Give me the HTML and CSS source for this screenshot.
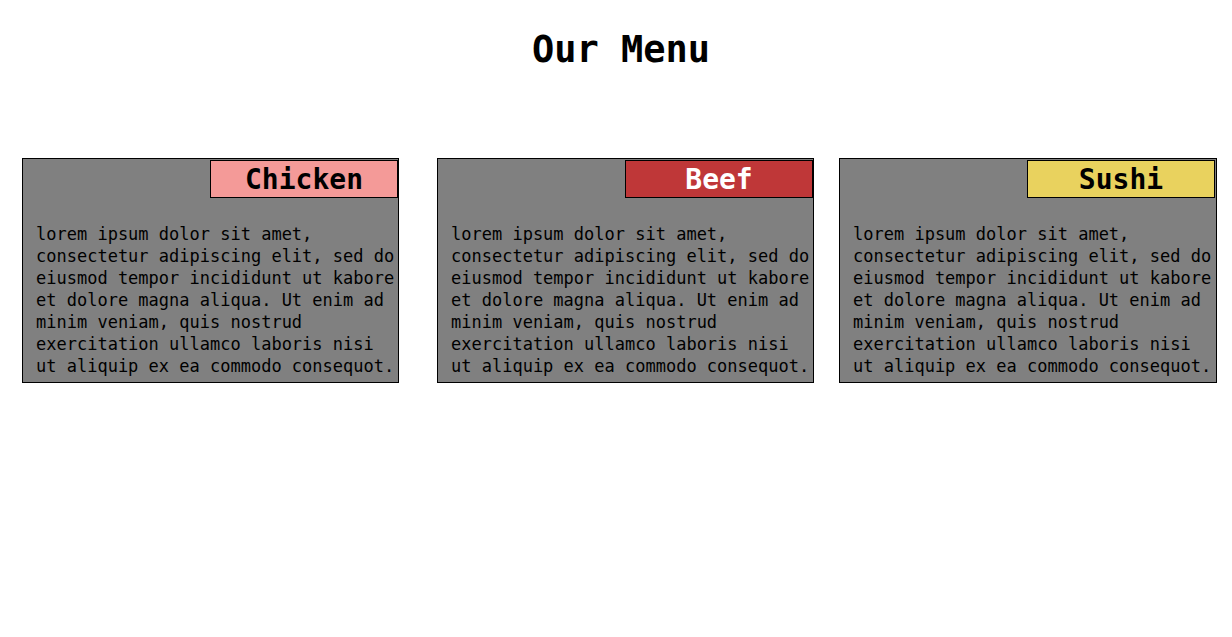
FILE: index.html
```html
<!DOCTYPE html>
<html lang="en">
<head>
<meta charset="utf-8">
<title>Our Menu</title>
<link rel="stylesheet" href="styles.css">
</head>
<body>
  <h1 class="title">Our Menu</h1>
  <main class="menu">
    <section class="card card-first">
      <h2 class="label label-chicken">Chicken</h2>
      <p class="desc">lorem ipsum dolor sit amet, consectetur adipiscing elit, sed do eiusmod tempor incididunt ut kabore et dolore magna aliqua. Ut enim ad minim veniam, quis nostrud exercitation ullamco laboris nisi ut aliquip ex ea commodo consequot.</p>
    </section>
    <section class="card card-second">
      <h2 class="label label-beef">Beef</h2>
      <p class="desc">lorem ipsum dolor sit amet, consectetur adipiscing elit, sed do eiusmod tempor incididunt ut kabore et dolore magna aliqua. Ut enim ad minim veniam, quis nostrud exercitation ullamco laboris nisi ut aliquip ex ea commodo consequot.</p>
    </section>
    <section class="card card-third">
      <h2 class="label label-sushi">Sushi</h2>
      <p class="desc">lorem ipsum dolor sit amet, consectetur adipiscing elit, sed do eiusmod tempor incididunt ut kabore et dolore magna aliqua. Ut enim ad minim veniam, quis nostrud exercitation ullamco laboris nisi ut aliquip ex ea commodo consequot.</p>
    </section>
  </main>
</body>
</html>
```
FILE: styles.css
```css
html, body {
  margin: 0;
  padding: 0;
  background: #ffffff;
}

body {
  font-family: "DejaVu Sans Mono", "Liberation Mono", monospace;
  color: #000000;
}

.title {
  margin: 0;
  padding-top: 28px;
  padding-left: 10px;
  height: 44px;
  line-height: 44px;
  font-size: 37px;
  font-weight: bold;
  text-align: center;
}

.menu {
  display: flex;
  align-items: flex-start;
  padding-left: 22px;
  margin-top: 86px;
}

.card {
  width: 377px;
  box-sizing: border-box;
  border: 1px solid #000000;
  background: #808080;
  display: flex;
  flex-direction: column;
}

.card-second {
  margin-left: 38px;
}

.card-third {
  margin-left: 25px;
  width: 378px;
}

.label {
  align-self: flex-end;
  box-sizing: border-box;
  width: 188px;
  height: 38px;
  margin: 1px 1px 0 0;
  border: 1px solid #000000;
  font-size: 28px;
  line-height: 37px;
  font-weight: bold;
  text-align: center;
}

.card-first .label,
.card-second .label {
  margin-right: 0;
}

.label-chicken {
  background: #f49a98;
  color: #000000;
}

.label-beef {
  background: #bf3738;
  color: #ffffff;
}

.label-sushi {
  background: #e9d25e;
  color: #000000;
}

.desc {
  margin: 25px 0 5px 0;
  padding-left: 13px;
  font-size: 17px;
  line-height: 22px;
}
```
